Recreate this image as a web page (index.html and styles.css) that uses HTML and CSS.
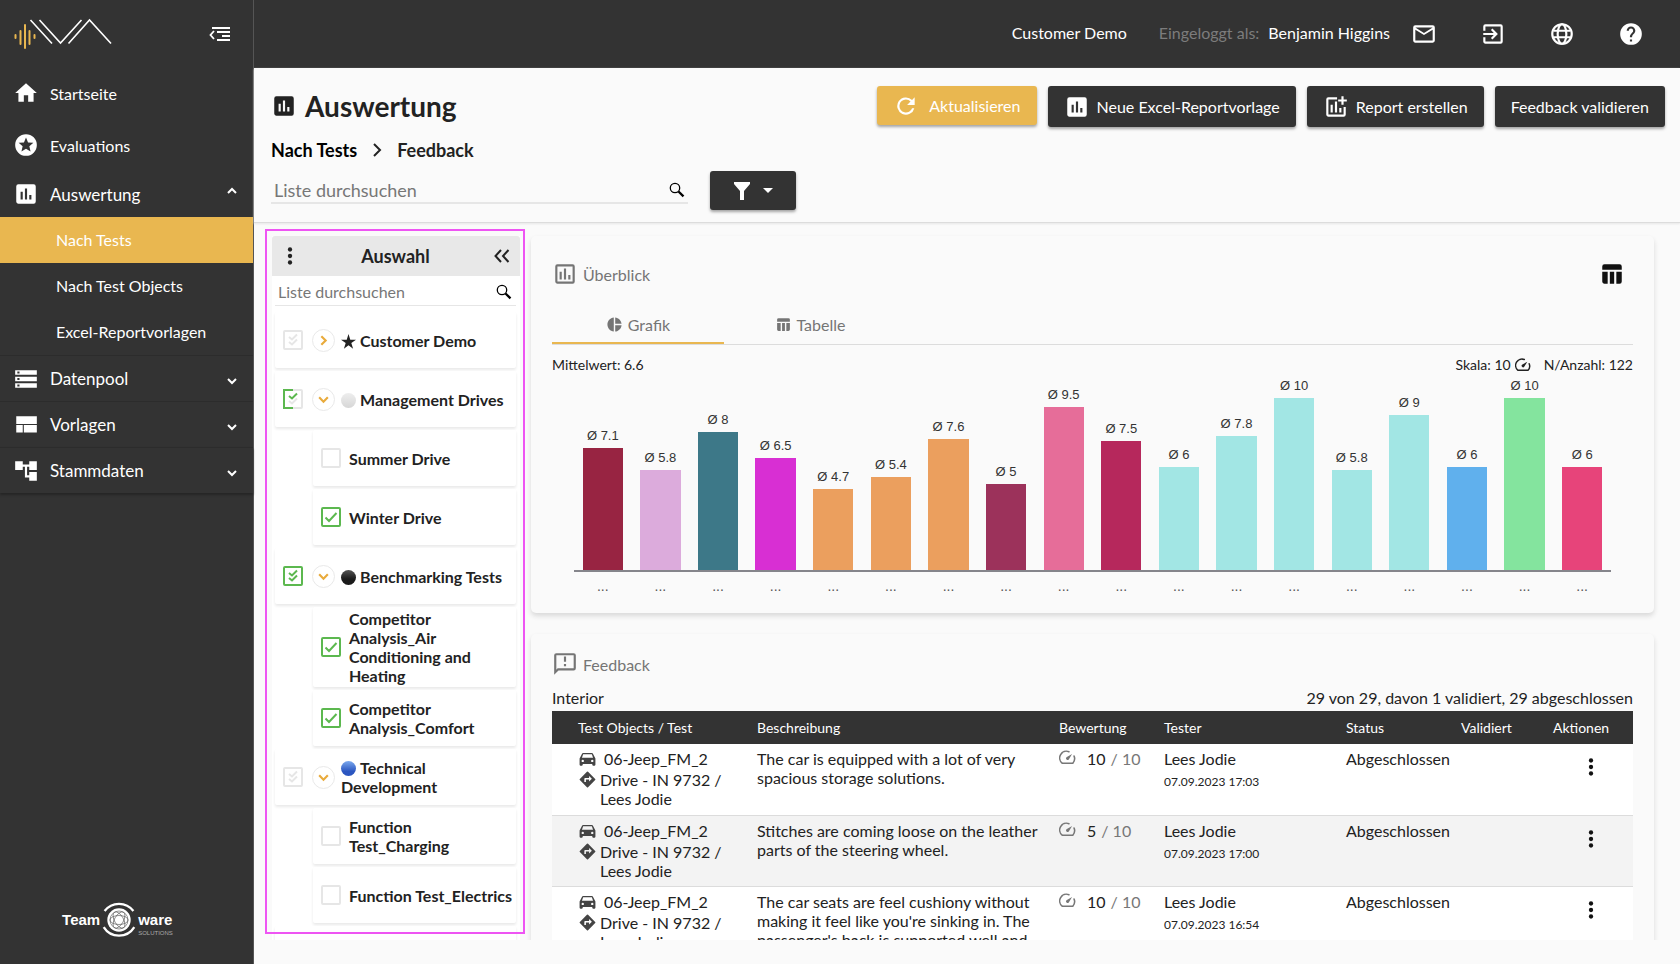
FILE: index.html
```html
<!DOCTYPE html>
<html lang="de">
<head>
<meta charset="utf-8">
<title>Auswertung</title>
<link rel="stylesheet" href="styles.css">
</head>
<body>
<svg class="sprite" aria-hidden="true">
  <symbol id="home" viewBox="0 0 24 24"><path d="M10 20v-6h4v6h5v-8h3L12 3 2 12h3v8z"/></symbol>
  <symbol id="stars" viewBox="0 0 24 24"><path d="M12 2a10 10 0 1 0 0 20 10 10 0 0 0 0-20zm4.2 16L12 15.500 7.800 18l1.100-4.800-3.700-3.200 4.900-.4L12 5l1.900 4.600 4.900.4-3.700 3.200z"/></symbol>
  <symbol id="chart" viewBox="0 0 24 24"><path d="M19 3H5a2 2 0 0 0-2 2v14c0 1.100.9 2 2 2h14a2 2 0 0 0 2-2V5a2 2 0 0 0-2-2zM9 17H7v-7h2v7zm4 0h-2V7h2v10zm4 0h-2v-4h2v4z"/></symbol>
  <symbol id="chart-outline" viewBox="0 0 24 24"><path d="M9 17H7v-7h2v7zm4 0h-2V7h2v10zm4 0h-2v-4h2v4zm2 2H5V5h14v14zm0-16H5a2 2 0 0 0-2 2v14c0 1.100.9 2 2 2h14a2 2 0 0 0 2-2V5a2 2 0 0 0-2-2z"/></symbol>
  <symbol id="chart-add" viewBox="0 0 24 24"><path d="M19 12v7H5V5h8V3H5a2 2 0 0 0-2 2v14c0 1.100.9 2 2 2h14a2 2 0 0 0 2-2v-7h-2zM7 10h2v7H7zm4-3h2v10h-2zm4 6h2v4h-2zM19 5V2h-2v3h-3v2h3v3h2V7h3V5z"/></symbol>
  <symbol id="storage" viewBox="0 0 24 24"><path d="M2 20h20v-4H2v4zm2-3h2v2H4v-2zM2 4v4h20V4H2zm4 3H4V5h2v2zm-4 7h20v-4H2v4zm2-3h2v2H4v-2z"/></symbol>
  <symbol id="template" viewBox="0 0 24 24"><path d="M3 4h19v7H3zM3 12h6v7H3zM10 12h12v7H10z"/></symbol>
  <symbol id="tree" viewBox="0 0 24 24"><path d="M22 11V3h-7v3H9V3H2v8h7V8h2v10h4v3h7v-8h-7v3h-2V8h2v3z"/></symbol>
  <symbol id="down" viewBox="0 0 12 12"><path d="M2 4l4 4 4-4" fill="none" stroke="currentColor" stroke-width="2"/></symbol>
  <symbol id="caret-down" viewBox="0 0 12 16"><path d="M2 8l4 4 4-4" fill="none" stroke="currentColor" stroke-width="2"/></symbol>
  <symbol id="caret-up" viewBox="0 0 12 16"><path d="M2 7l4-4 4 4" fill="none" stroke="currentColor" stroke-width="2"/></symbol>
  <symbol id="mail" viewBox="0 0 24 24"><path d="M20 4H4a2 2 0 0 0-2 2v12c0 1.100.9 2 2 2h16a2 2 0 0 0 2-2V6a2 2 0 0 0-2-2zm0 14H4V8l8 5 8-5v10zm-8-7L4 6h16l-8 5z"/></symbol>
  <symbol id="exit" viewBox="0 0 24 24"><path d="M10.100 15.600 11.500 17l5-5-5-5-1.400 1.400L12.700 11H3v2h9.700zM19 3H5a2 2 0 0 0-2 2v4h2V5h14v14H5v-4H3v4c0 1.100.9 2 2 2h14a2 2 0 0 0 2-2V5a2 2 0 0 0-2-2z"/></symbol>
  <symbol id="globe" viewBox="0 0 24 24"><g fill="none" stroke="currentColor" stroke-width="2"><circle cx="12" cy="12" r="9"/><ellipse cx="12" cy="12" rx="4" ry="9"/><path d="M4 9h16M4 15h16"/></g></symbol>
  <symbol id="help" viewBox="0 0 24 24"><path d="M12 2a10 10 0 1 0 0 20 10 10 0 0 0 0-20zm1 17h-2v-2h2v2zm2.100-7.700-.9.900c-.7.700-1.200 1.300-1.200 2.800h-2v-.5c0-1.100.5-2.100 1.200-2.800l1.200-1.300c.4-.3.600-.8.600-1.400a2 2 0 1 0-4 0H8a4 4 0 1 1 8 0c0 .9-.4 1.700-.9 2.300z"/></symbol>
  <symbol id="refresh" viewBox="0 0 24 24"><path d="M17.600 6.400A8 8 0 1 0 19.700 14h-2.100A6 6 0 1 1 12 6c1.700 0 3.100.7 4.200 1.800L13 11h7V4z"/></symbol>
  <symbol id="search" viewBox="0 0 16 16"><g fill="none" stroke="currentColor"><circle cx="6" cy="6" r="4.700" stroke-width="1.300"/><path d="M9.500 9.500l5 4.800" stroke-width="2.300"/></g></symbol>
  <symbol id="filter" viewBox="0 0 18 18"><path d="M1 0h16v2l-6 7v9H7V9L1 2z"/></symbol>
  <symbol id="dots" viewBox="0 0 24 24"><circle cx="12" cy="6" r="2"/><circle cx="12" cy="12" r="2"/><circle cx="12" cy="18" r="2"/></symbol>
  <symbol id="collapse" viewBox="0 0 16 14"><path d="M7 1L1.500 7 7 13M14.500 1L9 7l5.500 6" fill="none" stroke="currentColor" stroke-width="2"/></symbol>
  <symbol id="star" viewBox="0 0 16 16"><path d="M8 0l1.900 6H16l-5 3.600 1.900 6L8 12l-4.900 3.600L5 9.600 0 6h6.100z"/></symbol>
  <symbol id="table" viewBox="0 0 24 24"><path d="M10 10h4v11h-4zM16 21h3a2 2 0 0 0 2-2v-9h-5zM19 3H5a2 2 0 0 0-2 2v3h18V5a2 2 0 0 0-2-2zM3 10v9c0 1.100.9 2 2 2h3V10z"/></symbol>
  <symbol id="pie" viewBox="0 0 24 24"><path d="M11 2v20C5.900 21.500 2 17.200 2 12s3.900-9.500 9-10zM13 2v9h9c-.5-4.700-4.300-8.500-9-9zM13 13v9c4.700-.5 8.500-4.200 9-9z"/></symbol>
  <symbol id="gauge" viewBox="0 0 24 24"><path d="M14 3.800A9.500 9.500 0 0 0 4.500 20h15A9.500 9.500 0 0 0 21.300 10" fill="none" stroke="currentColor" stroke-width="2.200" stroke-linecap="round"/><path d="M18.500 7l-4.700 7.800a2.300 2.300 0 0 1-3.300-3.200z"/></symbol>
  <symbol id="feedback" viewBox="0 0 24 24"><path d="M20 2H4a2 2 0 0 0-2 2v18l4-4h14a2 2 0 0 0 2-2V4a2 2 0 0 0-2-2zm0 14H5.200L4 17.200V4h16v12zM11 5h2v5h-2zm0 7h2v2h-2z"/></symbol>
  <symbol id="car" viewBox="0 0 24 24"><path fill-rule="evenodd" d="M18.900 6A1.500 1.500 0 0 0 17.500 5h-11c-.7 0-1.200.4-1.400 1L2 12v8c0 .6.400 1 1 1h2a1 1 0 0 0 1-1v-1h12v1c0 .6.400 1 1 1h2a1 1 0 0 0 1-1v-8zM6 16.500a1.500 1.500 0 1 1 0-3 1.500 1.500 0 0 1 0 3zm12 0a1.500 1.500 0 1 1 0-3 1.500 1.500 0 0 1 0 3zM5 11l1.500-4.500h11L19 11z"/></symbol>
  <symbol id="route" viewBox="0 0 24 24"><path d="M21.700 11.300l-9-9a1 1 0 0 0-1.400 0l-9 9a1 1 0 0 0 0 1.400l9 9c.4.400 1 .4 1.400 0l9-9a1 1 0 0 0 0-1.400zM14 14.500V12h-4v3H8v-4c0-.6.400-1 1-1h5V7.500l3.500 3.500z"/></symbol>
  <symbol id="tick" viewBox="0 0 20 20"><path d="M4.500 10.500l3.500 3.500 7.500-8" fill="none" stroke="currentColor" stroke-width="2"/></symbol>
  <symbol id="ticks" viewBox="0 0 20 20"><path d="M6 7l3 2.500L14 4.500M6 12l3 2.500 5-5" fill="none" stroke="currentColor" stroke-width="2"/></symbol>
</svg>

<div class="app">
  <aside class="sidebar">
    <div class="brand">
      <svg class="logo" viewBox="0 0 98 32" role="img" aria-label="IVA">
        <path d="M1.500 17v3M6.500 13v13M11 7v23M15.500 13v13M20.500 17v3" stroke="#e9b750" stroke-width="2" stroke-linecap="round"/>
        <path d="M16.500 2L38 25.500M25.500 2l21 23 21-23M54.500 25.500L75.500 2 97 25.500" fill="none" stroke="#fff" stroke-width="1.600"/>
      </svg>
      <button class="plain" aria-label="Menü einklappen"><svg class="menu-icon" viewBox="0 0 22 15"><path d="M3 2h18M8 6h13M13 10h8M8 14h13M5 5L1.500 9 5 13" fill="none" stroke="currentColor" stroke-width="1.800"/></svg></button>
    </div>
    <nav class="nav">
      <a class="item tall" href="#"><svg class="icon"><use href="#home"/></svg>Startseite</a>
      <a class="item tall" href="#"><svg class="icon"><use href="#stars"/></svg>Evaluations</a>
      <button class="item open"><svg class="icon"><use href="#chart"/></svg><span class="grow">Auswertung</span><svg class="caret"><use href="#caret-up"/></svg></button>
      <a class="sub active" href="#">Nach Tests</a>
      <a class="sub" href="#">Nach Test Objects</a>
      <a class="sub" href="#">Excel-Reportvorlagen</a>
      <button class="item group"><svg class="icon"><use href="#storage"/></svg><span class="grow">Datenpool</span><svg class="caret"><use href="#caret-down"/></svg></button>
      <button class="item group"><svg class="icon"><use href="#template"/></svg><span class="grow">Vorlagen</span><svg class="caret"><use href="#caret-down"/></svg></button>
      <button class="item group last"><svg class="icon"><use href="#tree"/></svg><span class="grow">Stammdaten</span><svg class="caret"><use href="#caret-down"/></svg></button>
    </nav>
    <div class="maker">
      <span class="maker-name">Team</span>
      <svg class="maker-mark" viewBox="0 0 40 44">
        <path d="M4 12A20 20 0 0 1 36 12M3 30a20 20 0 0 0 34 0" fill="none" stroke="#fff" stroke-width="2.500"/>
        <circle cx="20" cy="22" r="13" fill="#fff"/>
        <g fill="none" stroke="#555" stroke-width=".7"><circle cx="20" cy="22" r="10"/><ellipse cx="20" cy="22" rx="10" ry="5"/><ellipse cx="20" cy="22" rx="10" ry="5" transform="rotate(60 20 22)"/><ellipse cx="20" cy="22" rx="10" ry="5" transform="rotate(120 20 22)"/></g>
      </svg>
      <span class="maker-name">ware<small>SOLUTIONS</small></span>
    </div>
  </aside>

  <div class="page">
    <header class="topbar">
      <span class="tenant">Customer Demo</span>
      <span class="muted-label">Eingeloggt als:</span>
      <span class="user">Benjamin Higgins</span>
      <div class="tools">
        <button class="plain" aria-label="Nachrichten"><svg class="icon"><use href="#mail"/></svg></button>
        <button class="plain" aria-label="Abmelden"><svg class="icon"><use href="#exit"/></svg></button>
        <button class="plain" aria-label="Sprache"><svg class="icon"><use href="#globe"/></svg></button>
        <button class="plain" aria-label="Hilfe"><svg class="icon"><use href="#help"/></svg></button>
      </div>
    </header>

    <section class="heading">
      <div class="heading-row">
        <h1><svg class="icon"><use href="#chart"/></svg>Auswertung</h1>
        <div class="actions">
          <button class="btn gold"><svg class="icon"><use href="#refresh"/></svg>Aktualisieren</button>
          <button class="btn"><svg class="icon"><use href="#chart"/></svg>Neue Excel-Reportvorlage</button>
          <button class="btn"><svg class="icon"><use href="#chart-add"/></svg>Report erstellen</button>
          <button class="btn">Feedback validieren</button>
        </div>
      </div>
      <div class="crumbs"><a href="#">Nach Tests</a><svg class="crumb-sep" viewBox="0 0 10 14"><path d="M2 1l6 6-6 6" fill="none" stroke="currentColor" stroke-width="2"/></svg><span>Feedback</span></div>
      <div class="search-row">
        <label class="search main-search"><input type="text" placeholder="Liste durchsuchen" aria-label="Liste durchsuchen"><svg class="glass"><use href="#search"/></svg></label>
        <button class="btn filter" aria-label="Filter"><svg class="funnel"><use href="#filter"/></svg><span class="triangle"></span></button>
      </div>
    </section>

    <div class="work">
      <div class="picker">
        <div class="picker-head">
          <button class="plain" aria-label="Mehr"><svg class="icon"><use href="#dots"/></svg></button>
          <h2>Auswahl</h2>
          <button class="plain" aria-label="Einklappen"><svg class="fold"><use href="#collapse"/></svg></button>
        </div>
        <label class="search side-search"><input type="text" placeholder="Liste durchsuchen" aria-label="Auswahl durchsuchen"><svg class="glass"><use href="#search"/></svg></label>
        <div class="tree">
          <div class="node">
            <label class="check"><input type="checkbox" aria-label="Customer Demo"><svg><use href="#ticks"/></svg></label>
            <button class="toggle closed" aria-label="Aufklappen"><svg><use href="#down"/></svg></button>
            <span class="node-label"><svg class="mark"><use href="#star"/></svg>Customer Demo</span>
          </div>
          <div class="node">
            <label class="check"><input type="checkbox" aria-label="Management Drives"><svg viewBox="0 0 20 20"><path d="M10 1H1v18h9" fill="none" stroke="#5cb84f" stroke-width="2"/><path d="M6 12l3 2.500 5-5" fill="none" stroke="#e6e6e6" stroke-width="2"/><path d="M6 7l3 2.500 5-5" fill="none" stroke="#5cb84f" stroke-width="2"/></svg></label>
            <button class="toggle" aria-label="Zuklappen"><svg><use href="#down"/></svg></button>
            <span class="node-label"><span class="mark ball pale"></span>Management Drives</span>
          </div>
          <label class="node leaf"><span class="check"><input type="checkbox"></span><span class="node-label">Summer Drive</span></label>
          <label class="node leaf"><span class="check"><input type="checkbox" checked><svg><use href="#tick"/></svg></span><span class="node-label">Winter Drive</span></label>
          <div class="node">
            <label class="check"><input type="checkbox" aria-label="Benchmarking Tests" checked><svg><use href="#ticks"/></svg></label>
            <button class="toggle" aria-label="Zuklappen"><svg><use href="#down"/></svg></button>
            <span class="node-label"><span class="mark ball black"></span>Benchmarking Tests</span>
          </div>
          <label class="node leaf"><span class="check"><input type="checkbox" checked><svg><use href="#tick"/></svg></span><span class="node-label">Competitor Analysis_Air Conditioning and Heating</span></label>
          <label class="node leaf"><span class="check"><input type="checkbox" checked><svg><use href="#tick"/></svg></span><span class="node-label">Competitor Analysis_Comfort</span></label>
          <div class="node">
            <label class="check"><input type="checkbox" aria-label="Technical Development"><svg><use href="#ticks"/></svg></label>
            <button class="toggle" aria-label="Zuklappen"><svg><use href="#down"/></svg></button>
            <span class="node-label"><span class="mark ball blue"></span>Technical Development</span>
          </div>
          <label class="node leaf"><span class="check"><input type="checkbox"></span><span class="node-label">Function<br>Test_Charging</span></label>
          <label class="node leaf"><span class="check"><input type="checkbox"></span><span class="node-label">Function Test_Electrics</span></label>
          <div class="node"></div>
        </div>
        <div class="highlight"></div>
      </div>

      <main class="content">
        <section class="card overview">
          <div class="card-head">
            <h3><svg class="icon"><use href="#chart-outline"/></svg>Überblick</h3>
            <button class="plain dark" aria-label="Tabelle anzeigen"><svg class="icon"><use href="#table"/></svg></button>
          </div>
          <div class="tabs" role="tablist">
            <button class="tab selected" role="tab"><svg><use href="#pie"/></svg>Grafik</button>
            <button class="tab" role="tab"><svg><use href="#table"/></svg>Tabelle</button>
          </div>
          <div class="stats"><span class="grow">Mittelwert: 6.6</span><span class="scale">Skala: 10 <svg><use href="#gauge"/></svg></span><span>N/Anzahl: 122</span></div>
          <div class="bars">
            <div class="slot"><span>Ø 7.1</span><i style="height:71%;background:#982442"></i></div>
            <div class="slot"><span>Ø 5.8</span><i style="height:58%;background:#dcabdc"></i></div>
            <div class="slot"><span>Ø 8</span><i style="height:80%;background:#3d7888"></i></div>
            <div class="slot"><span>Ø 6.5</span><i style="height:65%;background:#d82fd3"></i></div>
            <div class="slot"><span>Ø 4.7</span><i style="height:47%;background:#eb9f5e"></i></div>
            <div class="slot"><span>Ø 5.4</span><i style="height:54%;background:#eb9f5e"></i></div>
            <div class="slot"><span>Ø 7.6</span><i style="height:76%;background:#eb9f5e"></i></div>
            <div class="slot"><span>Ø 5</span><i style="height:50%;background:#9c325b"></i></div>
            <div class="slot"><span>Ø 9.5</span><i style="height:95%;background:#e66d99"></i></div>
            <div class="slot"><span>Ø 7.5</span><i style="height:75%;background:#b6285c"></i></div>
            <div class="slot"><span>Ø 6</span><i style="height:60%;background:#a2e6e4"></i></div>
            <div class="slot"><span>Ø 7.8</span><i style="height:78%;background:#a2e6e4"></i></div>
            <div class="slot"><span>Ø 10</span><i style="height:100%;background:#a2e6e4"></i></div>
            <div class="slot"><span>Ø 5.8</span><i style="height:58%;background:#a2e6e4"></i></div>
            <div class="slot"><span>Ø 9</span><i style="height:90%;background:#a2e6e4"></i></div>
            <div class="slot"><span>Ø 6</span><i style="height:60%;background:#60b0ed"></i></div>
            <div class="slot"><span>Ø 10</span><i style="height:100%;background:#84e49e"></i></div>
            <div class="slot"><span>Ø 6</span><i style="height:60%;background:#e7447a"></i></div>
          </div>
          <div class="ticks"><span>...</span><span>...</span><span>...</span><span>...</span><span>...</span><span>...</span><span>...</span><span>...</span><span>...</span><span>...</span><span>...</span><span>...</span><span>...</span><span>...</span><span>...</span><span>...</span><span>...</span><span>...</span></div>
        </section>

        <section class="card">
          <div class="card-head"><h3><svg class="icon"><use href="#feedback"/></svg>Feedback</h3></div>
          <div class="summary"><span>Interior</span><span>29 von 29, davon 1 validiert, 29 abgeschlossen</span></div>
          <table>
            <colgroup><col class="c-object"><col><col class="c-score"><col class="c-tester"><col class="c-status"><col class="c-valid"><col class="c-action"></colgroup>
            <thead><tr><th>Test Objects / Test</th><th>Beschreibung</th><th>Bewertung</th><th>Tester</th><th>Status</th><th>Validiert</th><th>Aktionen</th></tr></thead>
            <tbody>
              <tr>
                <td><div class="object"><svg><use href="#car"/></svg><span class="vehicle">06-Jeep_FM_2</span></div><div class="object"><svg><use href="#route"/></svg><span>Drive - IN 9732 / Lees Jodie</span></div></td>
                <td>The car is equipped with a lot of very spacious storage solutions.</td>
                <td><div class="score"><svg><use href="#gauge"/></svg><b>10</b> / 10</div></td>
                <td>Lees Jodie<time>07.09.2023 17:03</time></td><td>Abgeschlossen</td><td></td>
                <td><button class="plain dark row-menu" aria-label="Aktionen"><svg class="icon"><use href="#dots"/></svg></button></td>
              </tr>
              <tr>
                <td><div class="object"><svg><use href="#car"/></svg><span class="vehicle">06-Jeep_FM_2</span></div><div class="object"><svg><use href="#route"/></svg><span>Drive - IN 9732 / Lees Jodie</span></div></td>
                <td>Stitches are coming loose on the leather parts of the steering wheel.</td>
                <td><div class="score"><svg><use href="#gauge"/></svg><b>5</b> / 10</div></td>
                <td>Lees Jodie<time>07.09.2023 17:00</time></td><td>Abgeschlossen</td><td></td>
                <td><button class="plain dark row-menu" aria-label="Aktionen"><svg class="icon"><use href="#dots"/></svg></button></td>
              </tr>
              <tr>
                <td><div class="object"><svg><use href="#car"/></svg><span class="vehicle">06-Jeep_FM_2</span></div><div class="object"><svg><use href="#route"/></svg><span>Drive - IN 9732 / Lees Jodie</span></div></td>
                <td>The car seats are feel cushiony without making it feel like you're sinking in. The passenger's back is supported well and</td>
                <td><div class="score"><svg><use href="#gauge"/></svg><b>10</b> / 10</div></td>
                <td>Lees Jodie<time>07.09.2023 16:54</time></td><td>Abgeschlossen</td><td></td>
                <td><button class="plain dark row-menu" aria-label="Aktionen"><svg class="icon"><use href="#dots"/></svg></button></td>
              </tr>
            </tbody>
          </table>
        </section>
      </main>
    </div>
  </div>
</div>
</body>
</html>
```
FILE: styles.css
```css
* { box-sizing: border-box; }

body {
  margin: 0;
  font: 16px/19px Lato, "Noto Sans", sans-serif;
  color: #222;
  background: #fafafa;
}

button, input { font: inherit; color: inherit; }
button { cursor: pointer; }
a { color: inherit; text-decoration: none; }
svg { fill: currentColor; flex: none; display: block; }
h1, h2, h3 { margin: 0; }

.sprite { display: none; }
.icon { width: 26px; height: 26px; }
.grow { flex: 1; text-align: left; }
.plain { display: flex; padding: 0; border: 0; background: none; }
.dark { color: #111; }

.app { display: flex; height: 100vh; overflow: hidden; }

/* Sidebar */
.sidebar {
  display: flex;
  flex-direction: column;
  flex: none;
  width: 254px;
  color: #fff;
  background: #333;
  border-right: 1px solid #555;
}
.brand {
  display: flex;
  align-items: center;
  justify-content: space-between;
  height: 67px;
  padding: 0 22px 0 14px;
}
.logo { width: 98px; height: 32px; }
.menu-icon { width: 22px; height: 15px; }
.nav { display: flex; flex-direction: column; }
.item, .sub {
  display: flex;
  align-items: center;
  height: 46px;
  border: 0;
  background: none;
}
.item { gap: 11px; padding: 0 15px 0 13px; font-size: 17px; }
.tall { height: 52px; font-size: 16px; }
.sub { padding: 0 0 2px 56px; }
.active { background: #e9b750; }
.group { border-top: 1px solid #2c2c2c; }
.last { box-shadow: 0 2px 2px #262626; }
.caret { width: 12px; height: 16px; }

.maker {
  display: flex;
  align-items: center;
  justify-content: center;
  gap: 1px;
  margin: auto 18px 22px 0;
}
.maker-mark { width: 36px; height: 44px; }
.maker-name {
  display: grid;
  font: bold 15px/16px "Liberation Sans Narrow", "Liberation Sans", sans-serif;
}
.maker-name small { height: 0; font-size: 6px; line-height: 10px; font-weight: normal; color: #aaa; }

/* Top bar */
.page { display: flex; flex-direction: column; flex: 1; min-width: 0; }
.topbar {
  display: flex;
  align-items: center;
  justify-content: flex-end;
  flex: none;
  height: 68px;
  padding-right: 36px;
  color: #fff;
  background: #333;
}
.topbar span { padding-bottom: 3px; }
.tenant { margin-right: 32px; }
.muted-label { margin-right: 9px; color: #7c7c7c; }
.tools { display: flex; gap: 43px; margin-left: 21px; }

/* Page heading */
.heading {
  flex: none;
  padding: 18px 15px 12px 17px;
  border-bottom: 1px solid #dcdcdc;
  box-shadow: 0 1px 2px #e6e6e6;
}
.heading-row { display: flex; justify-content: space-between; height: 52px; }
h1 { display: flex; gap: 8px; height: 39px; align-items: center; font-size: 28px; line-height: 36px; }
.actions { display: flex; align-items: flex-start; gap: 11px; }
.btn {
  display: flex;
  align-items: center;
  gap: 7px;
  height: 41px;
  padding: 0 16px;
  border: 0;
  border-radius: 3px;
  color: #fff;
  background: #333;
  box-shadow: 0 2px 3px rgba(0, 0, 0, .35);
}
.gold { height: 39px; gap: 10px; background: #e9b750; }
.crumbs {
  display: flex;
  align-items: center;
  gap: 15px;
  height: 24px;
  font-size: 18px;
  font-weight: bold;
}
.crumbs a { color: #000; }
.crumb-sep { width: 10px; height: 14px; }
.search-row { display: flex; align-items: center; gap: 22px; margin-top: 9px; }
.search { display: flex; align-items: center; border-bottom: 2px solid #e6e6e6; }
.search input { flex: 1; min-width: 0; padding: 0; border: 0; outline: 0; background: none; }
.search input::placeholder { color: #777; opacity: 1; }
.glass { width: 16px; height: 16px; color: #000; }
.main-search { flex: 0 1 417px; height: 27px; padding: 1px 3px 0; font-size: 18px; }
.filter { width: 86px; height: 39px; justify-content: center; gap: 12px; }
.funnel { width: 18px; height: 18px; }
.triangle { border: 5px solid transparent; border-top-color: #fff; border-bottom: 0; }

/* Work area */
.work {
  display: flex;
  flex: 1;
  min-height: 0;
  gap: 11px;
  margin-bottom: 24px;
  padding: 13px 26px 0 18px;
  overflow: hidden;
}
.picker { position: relative; flex: none; width: 248px; background: #fff; }
.highlight {
  position: absolute;
  inset: -7px -5px 6px -7px;
  border: 2px solid #ee55f3;
  pointer-events: none;
}
.picker-head {
  display: flex;
  align-items: center;
  justify-content: space-between;
  height: 40px;
  padding: 0 10px 0 5px;
  border-radius: 3px 3px 0 0;
  background: #e8e8e8;
}
.picker-head .icon { width: 26px; height: 26px; }
h2 { padding-right: 6px; font-size: 18px; line-height: 24px; }
.fold { width: 16px; height: 14px; }
.side-search { height: 30px; margin: 0 4px 6px 3px; padding: 2px 4px 0 3px; border-bottom-width: 1px; }
.tree { display: flex; flex-direction: column; gap: 3px; padding: 0 4px 0 3px; }
.node {
  display: flex;
  align-items: center;
  flex: none;
  min-height: 56px;
  padding: 2px 4px 2px 8px;
  border-radius: 2px;
  font-weight: bold;
  background: #fff;
  box-shadow: 0 2px 3px #e9e9e9;
}
.leaf { gap: 8px; margin-left: 38px; padding-right: 0; }
.node-label { flex: 1; }
.check { display: grid; flex: none; width: 20px; height: 20px; color: #e6e6e6; }
.check input, .check svg { grid-area: 1 / 1; width: 20px; height: 20px; margin: 0; }
.check svg { pointer-events: none; }
.check input { appearance: none; border: 2px solid #e6e6e6; border-radius: 2px; }
.check:has(input:checked) { color: #5cb84f; }
.check input:checked { border-color: #5cb84f; }
.toggle {
  display: grid;
  place-items: center;
  flex: none;
  width: 23px;
  height: 23px;
  margin: 0 6px 0 9px;
  padding: 0;
  border: 1px solid #e9e9e9;
  border-radius: 50%;
  color: #e9ab3c;
  background: #fff;
}
.toggle svg { width: 13px; height: 13px; }
.closed svg { transform: rotate(-90deg); }
.mark { display: inline-block; width: 15px; height: 15px; margin-right: 4px; vertical-align: -2px; }
.ball { border-radius: 50%; }
.pale { background: linear-gradient(#eee, #d6d6d6); }
.black { background: linear-gradient(#555, #1b1b1b 60%); }
.blue { background: linear-gradient(#7ba9ee, #2b56c0 70%); }

/* Cards */
.content { display: flex; flex-direction: column; flex: 1; min-width: 0; gap: 21px; }
.card {
  flex: none;
  padding: 16px 21px 17px;
  border-radius: 5px;
  box-shadow: 0 3px 5px #d9d9d9;
}
.card-head { display: flex; align-items: center; justify-content: space-between; height: 28px; padding-right: 8px; }
.overview .card-head { height: 44px; }
h3 { display: flex; align-items: center; gap: 5px; font-size: 16px; font-weight: normal; color: #757575; }
.tabs { display: flex; margin-top: 9px; border-bottom: 1px solid #dcdcdc; }
.tab {
  display: flex;
  align-items: center;
  justify-content: center;
  gap: 5px;
  width: 172px;
  height: 39px;
  padding: 2px 0 0;
  border: 0;
  border-bottom: 2px solid transparent;
  color: #757575;
  background: none;
}
.tab svg { width: 17px; height: 17px; }
.selected { border-color: #e9b750; }
.stats { display: flex; gap: 13px; margin-top: 10px; font-size: 14px; }
.scale { display: flex; align-items: center; gap: 4px; }
.scale svg { width: 16px; height: 16px; }
.bars {
  display: flex;
  height: 198px;
  margin: 0 22px;
  padding-top: 24px;
  border-bottom: 2px solid #85858b;
  font: 13px/24px "Liberation Sans", Arial, sans-serif;
  color: #333;
}
.slot { display: flex; flex: 1; flex-direction: column; justify-content: flex-end; align-items: center; }
.slot span { margin-top: -24px; }
.slot i { flex: none; width: 70%; }
.ticks { display: flex; margin: 4px 22px 0; font: 14px/20px "Liberation Sans", Arial, sans-serif; color: #555; }
.ticks span { flex: 1; text-align: center; }

/* Feedback table */
.summary { display: flex; justify-content: space-between; margin: 10px 0 4px; }
table { width: 100%; table-layout: fixed; border-collapse: collapse; }
.c-object { width: 205px; }
.c-score { width: 105px; }
.c-tester { width: 182px; }
.c-status { width: 115px; }
.c-valid { width: 92px; }
.c-action { width: 80px; }
th {
  height: 33px;
  padding: 0 0 1px;
  font-size: 14px;
  font-weight: normal;
  text-align: left;
  color: #fff;
  background: #333;
}
th:first-child, td:first-child { padding-left: 26px; }
td { height: 71px; padding: 5px 20px 5px 0; vertical-align: top; border-bottom: 1px solid #dcdcdc; }
td:first-child { padding-right: 34px; }
td:nth-child(n+3) { padding-right: 0; }
tbody tr { background: #fff; }
tbody tr:nth-child(even) { background: #f3f3f3; }
.object { display: flex; gap: 3px; min-height: 21px; }
.object svg { width: 19px; height: 19px; color: #444; }
.vehicle { padding-left: 4px; }
.score { display: flex; gap: 5px; color: #777; }
.score svg { width: 17px; height: 17px; margin-right: 6px; }
.score b { font-weight: normal; color: #222; }
time { display: block; margin-top: 4px; font-size: 12px; }
.row-menu { margin: 5px 0 0 25px; }
```
